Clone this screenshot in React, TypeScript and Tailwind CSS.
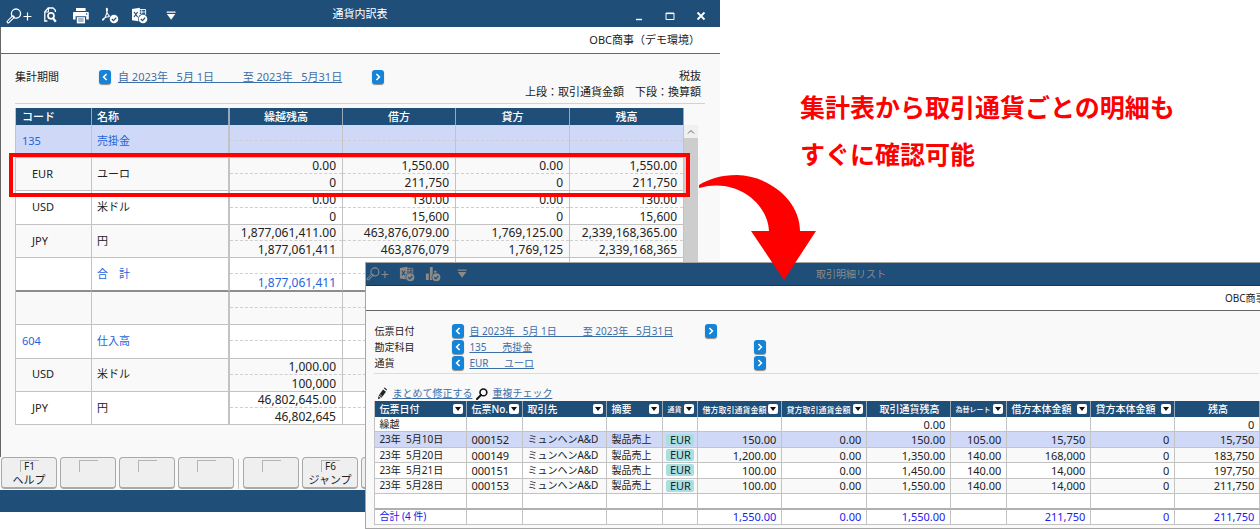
import React from 'react'

type Amount = [string, string]

interface SummaryRow {
  code: string
  name: string
  amounts: Amount[]
  kind?: 'group' | 'total' | 'selected'
}

const NONE: Amount = ['', '']

const SUMMARY_ROWS: SummaryRow[] = [
  { code: '135', name: '売掛金', amounts: [NONE, NONE, NONE, NONE], kind: 'selected' },
  { code: 'EUR', name: 'ユーロ', amounts: [['0.00', '0'], ['1,550.00', '211,750'], ['0.00', '0'], ['1,550.00', '211,750']] },
  { code: 'USD', name: '米ドル', amounts: [['0.00', '0'], ['130.00', '15,600'], ['0.00', '0'], ['130.00', '15,600']] },
  {
    code: 'JPY',
    name: '円',
    amounts: [
      ['1,877,061,411.00', '1,877,061,411'],
      ['463,876,079.00', '463,876,079'],
      ['1,769,125.00', '1,769,125'],
      ['2,339,168,365.00', '2,339,168,365'],
    ],
  },
  { code: '', name: '合　計', amounts: [['', '1,877,061,411'], NONE, NONE, NONE], kind: 'total' },
  { code: '', name: '', amounts: [NONE, NONE, NONE, NONE] },
  { code: '604', name: '仕入高', amounts: [NONE, NONE, NONE, NONE], kind: 'group' },
  { code: 'USD', name: '米ドル', amounts: [['1,000.00', '100,000'], NONE, NONE, NONE] },
  { code: 'JPY', name: '円', amounts: [['46,802,645.00', '46,802,645'], NONE, NONE, NONE] },
]

interface Column {
  label: string
  width: string
  size?: string
  filter?: boolean
  center?: boolean
}

const DETAIL_COLUMNS: Column[] = [
  { label: '伝票日付', width: 'w-[92px]', filter: true },
  { label: '伝票No.', width: 'w-[56px]', filter: true },
  { label: '取引先', width: 'w-[84px]', filter: true },
  { label: '摘要', width: 'w-[56px]', filter: true },
  { label: '通貨', width: 'w-[35px]', filter: true, size: 'text-[7px]' },
  { label: '借方取引通貨金額', width: 'w-[84px]', filter: true, size: 'text-[8px]' },
  { label: '貸方取引通貨金額', width: 'w-[85px]', filter: true, size: 'text-[8px]' },
  { label: '取引通貨残高', width: 'w-[84px]', center: true },
  { label: '為替レート', width: 'w-[56px]', filter: true, size: 'text-[7px]' },
  { label: '借方本体金額', width: 'w-[84px]', filter: true },
  { label: '貸方本体金額', width: 'w-[84px]', filter: true },
  { label: '残高', width: 'w-[85px]', center: true },
]

const DETAIL_ROWS: string[][] = [
  ['繰越', '', '', '', '', '', '', '0.00', '', '', '', '0'],
  ['23年  5月10日', '000152', 'ミュンヘンA&D', '製品売上', 'EUR', '150.00', '0.00', '150.00', '105.00', '15,750', '0', '15,750'],
  ['23年  5月20日', '000149', 'ミュンヘンA&D', '製品売上', 'EUR', '1,200.00', '0.00', '1,350.00', '140.00', '168,000', '0', '183,750'],
  ['23年  5月21日', '000151', 'ミュンヘンA&D', '製品売上', 'EUR', '100.00', '0.00', '1,450.00', '140.00', '14,000', '0', '197,750'],
  ['23年  5月28日', '000153', 'ミュンヘンA&D', '製品売上', 'EUR', '100.00', '0.00', '1,550.00', '140.00', '14,000', '0', '211,750'],
  ['', '', '', '', '', '', '', '', '', '', '', ''],
  ['合計 (4 件)', '', '', '', '', '1,550.00', '0.00', '1,550.00', '', '211,750', '0', '211,750'],
]

const PERIOD = '自 2023年   5月 1日          至 2023年   5月31日'

/* Toolbar icons */

const ZoomPlusIcon = ({ className }: { className: string }) => (
  <svg viewBox="0 0 26 16" className={className} fill="none" stroke="currentColor">
    <circle cx="10" cy="5.6" r="4.6" strokeWidth="1.3" />
    <path d="M7 9 2.2 13.8" strokeWidth="3.2" strokeLinecap="round" />
    <path d="M6.4 9.6 2.3 13.7" stroke="#1f4e79" strokeWidth="1.2" strokeLinecap="round" />
    <path d="M17.5 8.5h8M21.5 4.5v8" strokeWidth="1.2" />
  </svg>
)

const PreviewIcon = () => (
  <svg viewBox="0 0 17 17" className="h-[17px] w-[17px]" fill="none" stroke="currentColor">
    <path d="M3.4 14H.8V4.8L4.2 1H9l2.4 2.2V5" strokeWidth="1.3" />
    <path d="M4.4 1v4H1" strokeWidth="1.1" />
    <circle cx="7" cy="8.8" r="3" strokeWidth="1.7" />
    <path d="m9 11.2 2.8 3.6" strokeWidth="2.2" />
  </svg>
)

const PrinterIcon = () => (
  <svg viewBox="0 0 17 17" className="h-[17px] w-[17px]" fill="currentColor">
    <path d="M3 1h9.6v3H3z" />
    <path d="M1 5h13.8q1 0 1 1v6.4h-2.6V9.2H2.6v3.2H0V6q0-1 1-1z" />
    <path d="M3.8 10.2h8.2V16.4H3.8z" />
    <path d="M5.2 12h5.4M5.2 14h5.4" stroke="#1f4e79" strokeWidth=".8" />
    <circle cx="13.6" cy="7" r=".8" fill="#1f4e79" />
  </svg>
)

const CheckBadge = () => (
  <>
    <circle cx="12" cy="12" r="5" fill="#1f4e79" stroke="none" />
    <circle cx="12" cy="12" r="4.3" fill="currentColor" stroke="none" />
    <path d="m9.9 12 1.6 1.6 2.7-3" fill="none" stroke="#1f4e79" strokeWidth="1.3" />
  </>
)

const PdfIcon = () => (
  <svg viewBox="0 0 17 17" className="h-[17px] w-[17px]" fill="none" stroke="currentColor">
    <path d="M4.6 1.2c1.4 0 .8 3.2-.2 5.8-1 2.8-2.2 6.2-3.6 6.2-.9-.5 1.2-2.5 3.9-3.2 2.2-.6 4.4-.6 4.6-.1-1.4.3-3.4-2-4.2-4.3-.6-1.9-1-4.4-.5-4.4Z" strokeWidth="1.1" />
    <CheckBadge />
  </svg>
)

const ExcelIcon = ({ className }: { className: string }) => (
  <svg viewBox="0 0 17 17" className={className} fill="none" stroke="currentColor">
    <path d="M8 2.5h6.6v10H8M10.8 2.5v10M8 5h6.6M8 7.5h6.6" strokeWidth=".9" />
    <path d="M1 2 8.8.8v13.6L1 13.2z" fill="currentColor" stroke="none" />
    <path d="m3 5 3.6 5M6.6 5 3 10" stroke="#1f4e79" strokeWidth="1.2" />
    <CheckBadge />
  </svg>
)

const ChartIcon = () => (
  <svg viewBox="0 0 17 17" className="h-4 w-4" fill="currentColor">
    <path d="M1 8h3v7H1zM5.2 1h3v14h-3zM9.6 5h2.6v6H9.6z" />
    <CheckBadge />
  </svg>
)

const MenuCaretIcon = () => (
  <svg viewBox="0 0 22 17" className="h-4 w-[22px]" fill="currentColor">
    <path d="M6.4 3.6h9.4v1.5H6.4zM6.6 6.4h9L11.1 12.4z" />
  </svg>
)

const PencilIcon = () => (
  <svg viewBox="0 0 12 14" className="h-[13px] w-[11px]" fill="#222">
    <path d="M6.6 2.6 9.8 5 5 11.6 1.8 9.2z" />
    <path d="m7.4 1.4 1-.9 2.6 2-.6 1.2zM1.4 10l2.7 2-2.9 1.4z" />
    <path d="m2.8 8 3.1 2.3" stroke="#f9f9f9" strokeWidth=".7" />
  </svg>
)

const SearchIcon = () => (
  <svg viewBox="0 0 12 12" className="h-3 w-3" fill="none" stroke="#111">
    <circle cx="7.4" cy="4.4" r="3.4" strokeWidth="1.6" />
    <path d="M5 7 1 11" strokeWidth="2" strokeLinecap="round" />
  </svg>
)

const StepButton = ({ dir, label }: { dir: 'prev' | 'next'; label: string }) => (
  <button
    aria-label={label}
    className="flex h-[14px] w-3 shrink-0 items-center justify-center rounded-[3px] bg-[#1483d8] text-white shadow-[0_1px_1px_#8a8a8a]"
  >
    <svg viewBox="0 0 6 8" className="h-2 w-1.5" fill="none" stroke="currentColor" strokeWidth="1.6">
      <path d={dir === 'prev' ? 'M4.6 1 1.6 4l3 3' : 'M1.4 1l3 3-3 3'} />
    </svg>
  </button>
)

const SummaryCell = ({ amount, first }: { amount: Amount; first: boolean }) => (
  <td className={`${first ? 'border-l' : ''} border-r border-b border-[#c3c3c3] p-0 text-right text-[12px]`}>
    <div className="h-4 border-b border-dashed border-[#cfcfcf] pr-1.5 leading-4">{amount[0]}</div>
    <div className="h-4 pr-1.5 leading-[18px]">{amount[1]}</div>
  </td>
)

const SummaryTable = () => (
  <table className="h-[317px] w-full table-fixed border-separate border-spacing-0 border-l border-[#c3c3c3] text-[11px]">
    <thead>
      <tr className="h-[17px] bg-[#1f4e79] leading-4 text-white">
        <th className="w-[76px] border-r border-[#9aa9b8] p-0 pl-1.5 text-left font-medium">コード</th>
        <th className="w-[137px] border-r border-[#9aa9b8] p-0 pl-[5px] text-left font-medium">名称</th>
        <th className="w-[114px] border-r border-l border-[#9aa9b8] p-0 font-medium">繰越残高</th>
        <th className="w-[113px] border-r border-[#9aa9b8] p-0 font-medium">借方</th>
        <th className="w-[114px] border-r border-[#9aa9b8] p-0 font-medium">貸方</th>
        <th className="w-[114px] border-r border-[#9aa9b8] p-0 font-medium">残高</th>
      </tr>
    </thead>
    <tbody>
      {SUMMARY_ROWS.map((row, i) => {
        const bg = row.kind === 'selected' ? 'bg-[#cfd8f7]' : i % 2 ? 'bg-[#f9f9f9]' : 'bg-white'
        const color = row.kind ? 'text-[#2563dc]' : 'text-[#222]'
        const edge = row.kind === 'total' ? '*:border-b-2 *:border-b-[#8c8c8c]' : ''
        return (
          <tr key={i} className={`${bg} ${color} ${edge}`}>
            <td className={`border-r border-b border-[#c3c3c3] p-0 ${row.kind ? 'pl-1.5' : 'pl-4'}`}>{row.code}</td>
            <td className="border-r border-b border-[#c3c3c3] p-0 pl-[5px]">{row.name}</td>
            {row.amounts.map((amount, j) => (
              <SummaryCell key={j} amount={amount} first={j === 0} />
            ))}
          </tr>
        )
      })}
    </tbody>
  </table>
)

const FunctionKey = ({ code = '', label = '' }: { code?: string; label?: string }) => (
  <button
    aria-label={label || '未割当'}
    className="flex h-8 w-14 shrink-0 flex-col items-center rounded-[4px] border border-b-2 border-[#a9a9a9] bg-[#efefef] pt-0.5 text-[#222]"
  >
    <span className="h-3 w-[19px] border-t border-l border-[#b5b5b5] text-[10px] leading-[11px]">{code}</span>
    <span className="text-[11px] leading-4">{label}</span>
  </button>
)

const SummaryWindow = () => (
  <section className="w-4/7 shrink-0 bg-[#f9f9f9]">
    <header className="grid h-[27px] grid-cols-3 items-center bg-[#1f4e79] pt-0.5 text-white">
      <div className="flex items-center gap-3 pt-0.5 pl-1.5">
        <button aria-label="拡大"><ZoomPlusIcon className="h-4 w-[26px]" /></button>
        <button aria-label="プレビュー"><PreviewIcon /></button>
        <button aria-label="印刷"><PrinterIcon /></button>
        <button aria-label="PDF"><PdfIcon /></button>
        <button aria-label="Excel"><ExcelIcon className="h-[17px] w-[17px]" /></button>
        <button aria-label="メニュー"><MenuCaretIcon /></button>
      </div>
      <h1 className="text-center text-[11px]">通貨内訳表</h1>
      <div className="flex items-center justify-end gap-[21px] pt-0.5 pr-3.5">
        <button aria-label="最小化">
          <svg viewBox="0 0 10 10" className="h-2.5 w-2.5"><path d="M2 8.5h6" stroke="currentColor" strokeWidth="1.4" /></svg>
        </button>
        <button aria-label="最大化">
          <svg viewBox="0 0 10 10" className="h-2.5 w-2.5"><path d="M1 2h8v6.5H1zM1 2.6h8" fill="none" stroke="currentColor" /></svg>
        </button>
        <button aria-label="閉じる">
          <svg viewBox="0 0 10 10" className="h-2.5 w-2.5"><path d="m1.5 1.5 7 7M8.5 1.5l-7 7" stroke="currentColor" strokeWidth="1.8" /></svg>
        </button>
      </div>
    </header>
    <div className="border-l border-[#666] pb-8">
      <div className="h-[27px] border-b border-[#666] bg-white pr-5 text-right text-[11px] leading-[26px]">OBC商事（デモ環境）</div>

      <div className="pr-[15px] pl-3.5">
        <div className="flex h-[50px] justify-between border-b border-[#d2d2d2] pt-3.5 pr-1 text-[11px] leading-4">
          <div className="flex h-[18px] items-center">
            <span className="w-[84px]">集計期間</span>
            <StepButton dir="prev" label="前の期間" />
            <a href="#period" className="w-[261px] pl-[7px] whitespace-pre text-[#3f6fa8] underline">{PERIOD}</a>
            <StepButton dir="next" label="次の期間" />
          </div>
          <div className="text-right">
            <p>税抜</p>
            <p>上段：取引通貨金額　下段：換算額</p>
          </div>
        </div>

        <div className="relative mt-1 flex pr-2">
          <SummaryTable />
          <div className="mt-[17px] w-3.5 shrink-0 bg-[#cdcdcd]">
            <div className="flex h-[13px] items-center justify-center bg-[#f0f0f0] text-[#666]">
              <svg viewBox="0 0 8 6" className="h-1.5 w-2"><path d="m1 4.5 3-3 3 3" fill="none" stroke="currentColor" /></svg>
            </div>
          </div>
          {/* highlighted EUR row */}
          <div className="absolute top-[45px] right-[15px] -left-1.5 h-11 border-4 border-[#f00]" />
        </div>
      </div>
    </div>

    <div className="flex h-[33px] gap-[3px] overflow-hidden pl-px">
      <FunctionKey code="F1" label="ヘルプ" />
      <FunctionKey />
      <FunctionKey />
      <FunctionKey />
      <div className="mx-px h-[30px] w-px shrink-0 self-center bg-[#c3c3c3]" />
      <FunctionKey />
      <FunctionKey code="F6" label="ジャンプ" />
      <FunctionKey />
    </div>
    <div className="h-[22px] bg-[#1f4e79]" />
  </section>
)

const DetailTable = () => (
  <table className="h-[124px] w-full table-fixed border-separate border-spacing-0 border-l border-[#c3c3c3] text-[10px] leading-[13px] whitespace-nowrap">
    <thead>
      <tr className="h-4 bg-[#1f4e79] text-white">
        {DETAIL_COLUMNS.map((col) => (
          <th key={col.label} className={`border-r border-[#9aa9b8] p-0 font-medium ${col.width} ${col.size ?? ''}`}>
            <div className={`flex items-center pr-[3px] pl-1 ${col.center ? 'justify-center' : 'justify-between'}`}>
              <span>{col.label}</span>
              {col.filter && (
                <button aria-label={`${col.label}で絞り込む`} className="flex h-2.5 w-2.5 shrink-0 items-center justify-center rounded-[2px] bg-white">
                  <svg viewBox="0 0 6 4" className="h-1 w-1.5"><path d="M0 0h6L3 4z" fill="#111" /></svg>
                </button>
              )}
            </div>
          </th>
        ))}
      </tr>
    </thead>
    <tbody>
      {DETAIL_ROWS.map((row, i) => {
        const bg = i === 1 ? 'bg-[#cfd8f7]' : i === 2 || i === 4 ? 'bg-[#f9f9f9]' : 'bg-white'
        const color = i === 6 ? 'text-[#1a1af0]' : 'text-[#222]'
        const edge = i === 5 ? '*:border-b-2 *:border-b-[#b0b0b0]' : ''
        return (
          <tr key={i} className={`h-[15px] ${bg} ${color} ${edge}`}>
            {row.map((value, j) => (
              <td
                key={j}
                className={`border-r border-b border-[#c3c3c3] py-0 ${j > 4 ? 'pr-[5px] pl-0 text-right text-[11px]' : j === 4 ? 'px-[3px]' : 'pr-0 pl-1 whitespace-pre'} ${j === 1 ? 'text-[11px]' : ''}`}
              >
                {j === 4 && value ? (
                  <span className="block rounded-[2px] bg-[#a9dfe3] text-center text-[11px] leading-[12px]">{value}</span>
                ) : (
                  value
                )}
              </td>
            ))}
          </tr>
        )
      })}
    </tbody>
  </table>
)

const FILTERS = [
  { label: '伝票日付', value: PERIOD, width: 'w-[241px]' },
  { label: '勘定科目', value: '135      売掛金', width: 'w-[290px]' },
  { label: '通貨', value: 'EUR      ユーロ', width: 'w-[290px]' },
]

const DetailWindow = () => (
  <section className="absolute top-[262px] left-[29%] w-[77%] border-y border-l border-[#a6a6a6] bg-[#f9f9f9]">
    <header className="grid h-[23px] grid-cols-3 items-center border-b border-[#16395a] bg-[#1f4e79] text-[#8d8b87]">
      <div className="flex items-center gap-2.5">
        <button aria-label="拡大"><ZoomPlusIcon className="h-[14px] w-[23px]" /></button>
        <button aria-label="Excel"><ExcelIcon className="h-4 w-4" /></button>
        <button aria-label="グラフ"><ChartIcon /></button>
        <button aria-label="メニュー"><MenuCaretIcon /></button>
      </div>
      <h2 className="text-center text-[10px]">取引明細リスト</h2>
    </header>
    <div className="h-[25px] border-b border-[#666] bg-white pr-2.5 text-right text-[10px] leading-6">OBC商事（デモ環境）</div>

    <div className="w-[894px] pr-px pl-2">
      <div className="border-b border-[#d9dcd9] pt-3 pb-0.5 text-[10px] leading-4">
        {FILTERS.map((filter) => (
          <div key={filter.label} className="flex h-4 items-center">
            <span className="w-[78px]">{filter.label}</span>
            <StepButton dir="prev" label={`前の${filter.label}`} />
            <a href="#filter" className={`${filter.width} pl-[5px] whitespace-pre text-[#3f6fa8] underline`}>{filter.value}</a>
            <StepButton dir="next" label={`次の${filter.label}`} />
          </div>
        ))}
      </div>
      <div className="flex items-center gap-1 pt-3 pl-[3px] text-[10px] leading-[15px] text-[#3f6fa8]">
        <PencilIcon />
        <a href="#edit" className="underline">まとめて修正する</a>
        <SearchIcon />
        <a href="#check" className="underline">重複チェック</a>
      </div>
      <DetailTable />
    </div>
    <div className="h-[3px]" />
  </section>
)

const App: React.FC = () => {
  return (
    <main className="relative flex min-h-screen w-full items-start overflow-hidden bg-white font-['Noto_Sans','Noto_Sans_CJK_JP',sans-serif] text-[#222]">
      <SummaryWindow />
      <p className="pt-[84px] pl-20 text-[25px] leading-[47px] font-bold text-[#f00]">
        集計表から取引通貨ごとの明細も
        <br />
        すぐに確認可能
      </p>
      <DetailWindow />
      <svg viewBox="0 0 118 107" className="absolute top-[174px] left-[55.5%] h-[107px] w-[118px]" fill="#f00">
        <path d="M0 11C10 5 22 1 38 1c28 0 63 23 63 56h16L85 106 52 57h18C69 30 38 3 0 14z" />
      </svg>
    </main>
  )
}

export default App
